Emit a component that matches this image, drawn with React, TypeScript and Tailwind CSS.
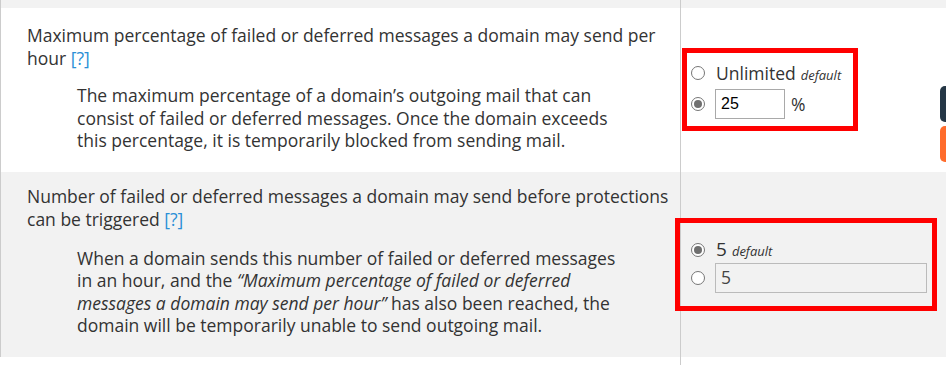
import React from 'react';

const Radio: React.FC<{ checked?: boolean }> = ({ checked }) => (
    <span className="w-[14px] h-[14px] rounded-full border border-[#767676] bg-white flex items-center justify-center shrink-0">
        {checked && <span className="w-[8px] h-[8px] rounded-full bg-[#6f6f6f]" />}
    </span>
);

const Help: React.FC = () => <a className="text-[#2a8fd6]">[?]</a>;

export default function App() {
    return (
        <div className="relative w-[946px] h-[365px] overflow-hidden bg-white text-[#333] font-['Open_Sans',sans-serif] text-[17.5px]">
            {/* strip above */}
            <div className="flex h-2 bg-[#f2f2f2] border-l border-[#ccc]">
                <div className="w-[680px] border-r border-[#ccc]" />
            </div>

            {/* row 1 */}
            <div className="flex bg-white border-l border-[#ccc]">
                <div className="w-[680px] shrink-0 border-r border-[#ccc] pl-[26px] pr-[4px] pt-[16px] pb-[20px]">
                    <div className="leading-[23px]">
                        Maximum percentage of failed or deferred messages a domain may send per hour <Help />
                    </div>
                    <p className="ml-[50px] w-[548px] mt-[14px] leading-[22.5px]">
                        The maximum percentage of a domain’s outgoing mail that can consist of failed or deferred messages. Once the domain exceeds this percentage, it is temporarily blocked from sending mail.
                    </p>
                </div>
                <div className="flex-1 flex items-center">
                    <div className="ml-px w-[176px] h-[83px] border-[5px] border-[#ff0000] pl-[4px] pt-[9px] flex flex-col gap-[5px]">
                        <div className="flex items-center h-[22px]">
                            <Radio />
                            <span className="ml-[11px] flex items-baseline">
                                <span className="text-[17.5px]">Unlimited</span>
                                <span className="ml-[5px] text-[13px] italic">default</span>
                            </span>
                        </div>
                        <div className="flex items-center h-[30px]">
                            <Radio checked />
                            <span className="ml-[10px] w-[70px] h-[30px] border border-[#a9a9a9] bg-white flex items-center pl-[5px] font-['Liberation_Sans',sans-serif] text-[16px] text-black">
                                25
                            </span>
                            <span className="ml-[6px] text-[17.5px]">%</span>
                        </div>
                    </div>
                </div>
            </div>

            {/* row 2 */}
            <div className="flex bg-[#f2f2f2] border-l border-[#ccc]">
                <div className="w-[680px] shrink-0 border-r border-[#ccc] pl-[26px] pr-[4px] pt-[13px] pb-[20px]">
                    <div className="leading-[23px]">
                        Number of failed or deferred messages a domain may send before protections can be triggered <Help />
                    </div>
                    <p className="ml-[50px] w-[548px] mt-[16px] leading-[22.5px]">
                        When a domain sends this number of failed or deferred messages in an hour, and the{' '}
                        <em>“Maximum percentage of failed or deferred messages a domain may send per hour”</em> has also been reached, the domain will be temporarily unable to send outgoing mail.
                    </p>
                </div>
                <div className="flex-1 flex items-center">
                    <div className="ml-[-6px] w-[262px] h-[93px] border-[5px] border-[#ff0000] pl-[11px] pr-[5px] pt-[16px] flex flex-col gap-[2px]">
                        <div className="flex items-center h-[22px]">
                            <Radio checked />
                            <span className="ml-[11px] flex items-baseline">
                                <span className="text-[19px]">5</span>
                                <span className="ml-[5px] text-[13px] italic">default</span>
                            </span>
                        </div>
                        <div className="flex items-center h-[30px]">
                            <Radio />
                            <span className="ml-[10px] flex-1 h-[30px] border border-[#bbb] bg-[#f2f2f2] flex items-center pl-[5px] text-[17.5px] text-[#444]">
                                5
                            </span>
                        </div>
                    </div>
                </div>
            </div>

            {/* row 3 */}
            <div className="flex h-[20px] bg-white">
                <div className="w-[681px] border-r border-[#ccc]" />
            </div>

            {/* side tabs */}
            <div className="absolute right-0 top-[86px] w-[6px] h-[36px] rounded-l-[5px] bg-[#253746]" />
            <div className="absolute right-0 top-[126px] w-[6px] h-[36px] rounded-l-[5px] bg-[#ff6c2c]" />
        </div>
    );
}
